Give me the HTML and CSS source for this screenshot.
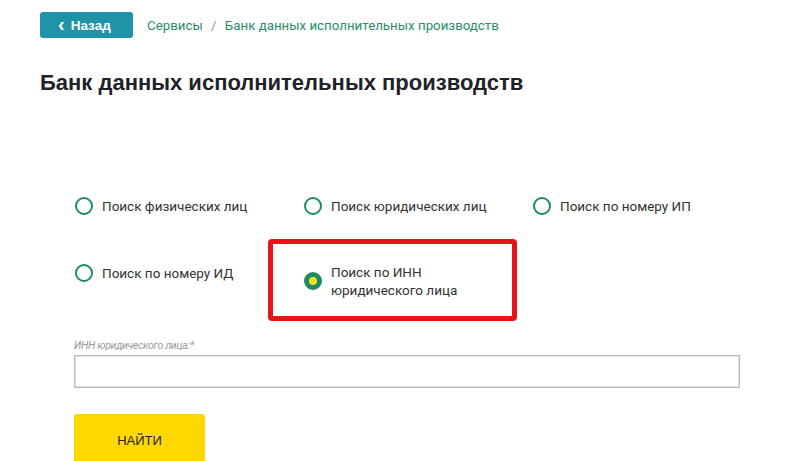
FILE: index.html
```html
<!DOCTYPE html>
<html lang="ru">
<head>
    <meta charset="UTF-8">
    <meta name="viewport" content="width=device-width, initial-scale=1.0">
    <link rel="stylesheet" href="styles.css">
    <title>Банк данных исполнительных производств</title>
</head>
<body>
    <div class="page">
        <div class="top">
            <a class="back" href="#"><span class="chev">‹</span> Назад</a>
            <div class="crumbs">
                <a href="#">Сервисы</a>
                <span class="sep">/</span>
                <a href="#">Банк данных исполнительных производств</a>
            </div>
        </div>

        <h1 class="title">Банк данных исполнительных производств</h1>

        <form class="search" action="">
            <div class="options">
                <label class="opt"><span class="dot"></span><span class="txt">Поиск физических лиц</span></label>
                <label class="opt"><span class="dot"></span><span class="txt">Поиск юридических лиц</span></label>
                <label class="opt"><span class="dot"></span><span class="txt">Поиск по номеру ИП</span></label>
                <label class="opt"><span class="dot"></span><span class="txt">Поиск по номеру ИД</span></label>
                <label class="opt opt-on">
                    <span class="dot"></span>
                    <span class="txt">Поиск по ИНН<br>юридического лица</span>
                    <span class="mark"></span>
                </label>
            </div>

            <p class="field-label">ИНН юридического лица:*</p>
            <input class="field" type="text" name="inn">

            <button class="find" type="button">НАЙТИ</button>
        </form>
    </div>
</body>
</html>
```

FILE: styles.css
```css
* {
    padding: 0;
    margin: 0;
    box-sizing: border-box;
}
body {
    font-family: Roboto, "Liberation Sans", sans-serif;
    background: #fff;
    color: #333;
}
a {
    text-decoration: none;
}
.page {
    padding: 12px 40px 0;
}
.top {
    display: flex;
    align-items: center;
    gap: 14px;
}
.back {
    display: flex;
    align-items: center;
    width: 93px;
    height: 26px;
    padding-left: 18px;
    background-color: #1f93a8;
    border-radius: 3px;
    color: #fff;
    font-family: "Liberation Sans", sans-serif;
    font-weight: 700;
    font-size: 13.5px;
}
.chev {
    font-size: 20px;
    line-height: 20px;
    margin-right: 6px;
    margin-top: -3px;
}
.crumbs {
    font-size: 13.3px;
    color: #2a8c6c;
}
.crumbs a {
    color: #2a8c6c;
}
.sep {
    color: #8a9a94;
    margin: 0 5px;
}
.title {
    margin-top: 32px;
    font-family: "Liberation Sans", sans-serif;
    font-size: 22px;
    line-height: 26px;
    font-weight: 700;
    color: #1f2329;
}
.search {
    margin: 100px 0 0 34px;
    width: 666px;
}
.options {
    display: grid;
    grid-template-columns: repeat(3, 229px);
    row-gap: 47px;
    padding-left: 1px;
    align-items: start;
}
.opt {
    position: relative;
    display: flex;
    align-items: center;
    gap: 9px;
    font-size: 13.5px;
    line-height: 20px;
    color: #333;
}
.dot {
    flex: none;
    width: 18px;
    height: 18px;
    border: 2px solid #1d8a66;
    border-radius: 50%;
}
.opt-on {
    line-height: 18px;
}
.opt-on .dot {
    border-width: 5px;
    background-color: #f3e21a;
}
.mark {
    position: absolute;
    left: -36px;
    top: -24px;
    width: 249px;
    height: 82px;
    border: 5px solid #e8141a;
    border-radius: 4px;
}
.field-label {
    margin-top: 41px;
    font-size: 10.5px;
    line-height: 12px;
    font-style: italic;
    color: #9a9a9a;
    letter-spacing: -0.3px;
}
.field {
    display: block;
    margin-top: 3px;
    width: 666px;
    height: 33px;
    border: 1px solid #b9b9b9;
    box-shadow: inset 0 0 0 1px #e2e2e2;
}
.find {
    display: block;
    margin-top: 26px;
    width: 131px;
    height: 52px;
    border: none;
    border-radius: 3px;
    background-color: #ffd800;
    font-family: "Liberation Sans", sans-serif;
    font-size: 13px;
    color: #222;
}
```
